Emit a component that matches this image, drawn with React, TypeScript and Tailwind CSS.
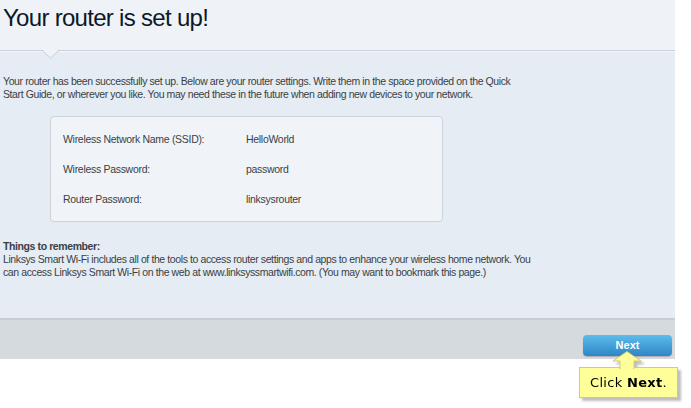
import React from 'react';

const settings = [
  { label: 'Wireless Network Name (SSID):', value: 'HelloWorld' },
  { label: 'Wireless Password:', value: 'password' },
  { label: 'Router Password:', value: 'linksysrouter' },
];

const App: React.FC = () => {
  return (
    <div className="relative w-[691px] h-[408px] bg-white font-['Liberation_Sans',Arial,sans-serif]">
      <div className="w-[675px]">
        {/* Header */}
        <div className="h-[50px] bg-[#eff3f8] px-[3px] pt-[2px]">
          <h1 className="text-[24px] leading-[32px] tracking-[-0.7px] text-[#0b1929]">Your router is set up!</h1>
        </div>

        {/* Divider with notch */}
        <div className="relative h-[3px] bg-[#e5ecf3]">
          <div className="h-[1px] bg-[#c9d0d7]" />
          <div className="h-[1px] bg-[#f4f7fa]" />
          <svg className="absolute left-[42px] top-[-1px]" width="17" height="10" viewBox="0 0 17 10">
            <polygon points="0,0 17,0 8.5,9" fill="#eff3f8" />
            <polyline points="0,1.5 8.5,9 17,1.5" fill="none" stroke="#c9d0d7" strokeWidth="1" />
          </svg>
        </div>

        {/* Body */}
        <div className="h-[265px] bg-[#e5ecf3] px-[3px] pt-[22px] text-[10.5px] leading-[13px] tracking-[-0.4px] text-[#3a3f45]">
          <p className="whitespace-nowrap">
            Your router has been successfully set up. Below are your router settings. Write them in the space provided on the Quick
            <br />
            Start Guide, or wherever you like. You may need these in the future when adding new devices to your network.
          </p>

          <div className="ml-[47px] mt-[15px] w-[393px] h-[106px] rounded-[4px] border border-[#cdd3d9] bg-[#f0f4f8] pl-[12px] pt-[16px]">
            {settings.map((s) => (
              <div key={s.label} className="flex h-[30px] items-start">
                <span className="w-[183px] tracking-[-0.3px]">{s.label}</span>
                <span className="tracking-[-0.3px]">{s.value}</span>
              </div>
            ))}
          </div>

          <div className="mt-[18px]">
            <p className="font-bold">Things to remember:</p>
            <p className="whitespace-nowrap">
              Linksys Smart Wi-Fi includes all of the tools to access router settings and apps to enhance your wireless home network. You
              <br />
              can access Linksys Smart Wi-Fi on the web at www.linksyssmartwifi.com. (You may want to bookmark this page.)
            </p>
          </div>
        </div>

        {/* Footer */}
        <div className="h-[41px] border-t-2 border-[#c7cdd3] bg-[#d5dade] flex justify-end items-start pr-[3px] pt-[15px]">
          <button className="w-[89px] h-[21px] rounded-[4px] bg-gradient-to-b from-[#5cbcea] to-[#2f86c6] text-[11px] font-bold text-white shadow-[0_1px_1px_rgba(0,0,0,0.2)]">
            Next
          </button>
        </div>
      </div>

      {/* Callout */}
      <div className="absolute left-[579px] top-[351px] w-[99px] drop-shadow-[3px_3px_1px_rgba(0,0,0,0.25)]">
        <svg className="absolute left-[33px] top-0" width="30" height="18" viewBox="0 0 30 18">
          <polygon points="15,0.5 29,10 22,10 22,17.5 8,17.5 8,10 1,10" fill="#ffff99" stroke="#d6c97a" strokeWidth="1" />
        </svg>
        <div className="mt-[16px] h-[31px] border border-[#d6c97a] bg-[#ffff99] flex items-center justify-center font-['DejaVu_Sans',Verdana,sans-serif] text-[13px] text-black tracking-[0.3px]">
          Click&nbsp;<span className="font-bold">Next</span>.
        </div>
        <div className="absolute left-[42px] top-[16px] w-[12px] h-[2px] bg-[#ffff99]" />
      </div>
    </div>
  );
};

export default App;
